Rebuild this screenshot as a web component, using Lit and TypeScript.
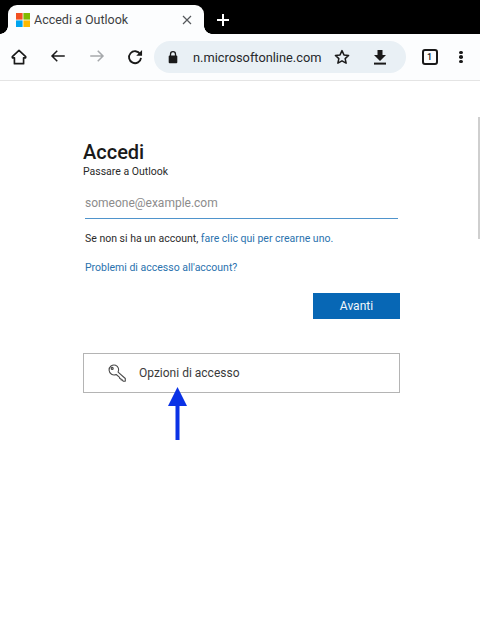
import { LitElement, html, css, svg } from 'lit';
import { customElement } from 'lit/decorators.js';

const icon = (size: number, body: unknown) =>
  html`<svg width=${size} height=${size} viewBox="0 0 24 24" fill="none" stroke="#1a1a1a" stroke-width="2">${body}</svg>`;

@customElement('app-root')
export class AppRoot extends LitElement {
  static styles = css`
    :host {
      display: block;
      position: relative;
      width: 480px;
      height: 633px;
      overflow: hidden;
      background: #fff;
      font-family: Roboto, "Liberation Sans", sans-serif;
      color: #1b1b1b;
    }

    /* browser chrome */
    .strip {
      display: flex;
      align-items: flex-end;
      height: 34px;
      background: #000;
      padding-left: 8px;
      box-sizing: border-box;
    }
    .tab {
      position: relative;
      display: flex;
      align-items: center;
      width: 196px;
      height: 29px;
      box-sizing: border-box;
      padding: 0 12px 0 8px;
      background: #fcfdfe;
      border-radius: 9px 9px 0 0;
      font-size: 12.5px;
      color: #3c3f43;
      gap: 4px;
    }
    .tab::before,
    .tab::after {
      content: '';
      position: absolute;
      bottom: 0;
      width: 8px;
      height: 8px;
    }
    .tab::before {
      left: -8px;
      background: radial-gradient(circle at 0 0, #000 7.5px, #fcfdfe 8px);
    }
    .tab::after {
      right: -8px;
      background: radial-gradient(circle at 100% 0, #000 7.5px, #fcfdfe 8px);
    }
    .tab span { flex: 1; }
    .new-tab { margin: 0 0 4px 9px; height: 20px; }
    .toolbar {
      display: flex;
      align-items: center;
      height: 46px;
      background: #fcfdfe;
      border-bottom: 1px solid #e4e4e4;
    }
    .tool {
      width: 39px;
      display: flex;
      justify-content: center;
      flex: none;
    }
    .tool.reload { margin: 0 1px 0 -1px; }
    .tools-left { display: flex; margin-left: -1px; }
    .omnibox {
      display: flex;
      align-items: center;
      width: 252px;
      height: 32px;
      margin-left: -1px;
      box-sizing: border-box;
      padding-left: 12px;
      background: #e9f0f5;
      border-radius: 16px;
      font-size: 12.8px;
      color: #27292c;
      flex: none;
    }
    .address { margin-left: 13px; white-space: nowrap; }
    .star { margin-left: 12px; display: flex; }
    .save { margin-left: 22px; display: flex; }
    .tabs-count { margin-left: 4px; }
    .count {
      display: flex;
      align-items: center;
      justify-content: center;
      width: 12px;
      height: 12px;
      border: 2px solid #1a1a1a;
      border-radius: 3px;
      font-size: 9px;
      font-weight: 500;
    }
    .menu {
      display: flex;
      flex-direction: column;
      gap: 1px;
      margin-left: 10px;
    }
    .menu i {
      width: 4px;
      height: 3.6px;
      border-radius: 50%;
      background: #1a1a1a;
    }

    /* sign in card */
    .page {
      display: flex;
      flex-direction: column;
      width: 317px;
      padding: 59px 0 0 83px;
    }
    h1 {
      margin: 0;
      font-size: 20px;
      line-height: 25px;
      font-weight: 500;
      color: #1a1a1a;
    }
    .sub {
      font-size: 10.5px;
      line-height: 14px;
      color: #2a2a2a;
    }
    .input {
      margin: 9px 2px 0 2px;
      height: 31px;
      line-height: 30px;
      box-sizing: border-box;
      border-bottom: 1px solid #4f94cc;
      font-size: 12px;
      color: #8c8c8c;
    }
    .note {
      margin: 13px 0 0 2px;
      font-size: 10.5px;
      line-height: 14px;
      color: #2b2b2b;
    }
    a { color: #2a72ae; text-decoration: none; }
    .trouble {
      margin: 15px 0 0 2px;
      font-size: 10.5px;
      line-height: 14px;
    }
    .actions {
      display: flex;
      justify-content: flex-end;
      margin-top: 18px;
    }
    .next {
      display: flex;
      align-items: center;
      justify-content: center;
      width: 87px;
      height: 26px;
      background: #0767b5;
      color: #f2f7fb;
      font-size: 12px;
    }
    .options {
      display: flex;
      align-items: center;
      height: 40px;
      margin-top: 34px;
      padding-left: 23px;
      box-sizing: border-box;
      border: 1px solid #b4b4b4;
      font-size: 12px;
      color: #3a3a3a;
    }
    .options span { margin-left: 12px; }

    /* overlays */
    .scrollbar {
      position: absolute;
      left: 478px;
      top: 117px;
      width: 2px;
      height: 122px;
      background: #cfcfcf;
    }
    .arrow { position: absolute; left: 168px; top: 387px; }
  `;

  render() {
    return html`
      <div class="strip">
        <div class="tab">
          <svg width="14" height="14" viewBox="0 0 14 14">
            <rect width="6.6" height="6.6" fill="#f25022" />
            <rect x="7.4" width="6.6" height="6.6" fill="#7fba00" />
            <rect y="7.4" width="6.6" height="6.6" fill="#00a4ef" />
            <rect x="7.4" y="7.4" width="6.6" height="6.6" fill="#ffb900" />
          </svg>
          <span>Accedi a Outlook</span>
          <svg width="10" height="10" viewBox="0 0 10 10" stroke="#55585c" stroke-width="1.2">
            <path d="M1 1l8 8M9 1l-8 8" />
          </svg>
        </div>
        <svg class="new-tab" width="20" height="20" viewBox="0 0 20 20" stroke="#fff" stroke-width="2">
          <path d="M10 4v12M4 10h12" />
        </svg>
      </div>
      <div class="toolbar">
        <div class="tools-left">
          <div class="tool">
            ${icon(20, svg`<path d="M12 4 4 11.5V13h2.5v7h11v-7H20v-1.5z" stroke-linejoin="round" />`)}
          </div>
          <div class="tool">
            ${icon(18, svg`<path d="M21 12H4M11 5l-7 7 7 7" />`)}
          </div>
          <div class="tool">
            ${html`<svg width="18" height="18" viewBox="0 0 24 24" fill="none" stroke="#a6a9ac" stroke-width="2">
              <path d="M3 12h17M13 5l7 7-7 7" />
            </svg>`}
          </div>
          <div class="tool reload">
            ${icon(20, svg`
              <path d="M18.2 8.5A7.2 7.2 0 1 0 19.2 13" stroke-width="2.2" />
              <path d="M20.5 3.5v7h-7z" fill="#1a1a1a" stroke="none" />
            `)}
          </div>
        </div>
        <div class="omnibox">
          <svg width="14" height="14" viewBox="0 0 14 14">
            <path d="M4.5 6V4.2a2.5 2.5 0 0 1 5 0V6" fill="none" stroke="#1a1a1a" stroke-width="1.3" />
            <rect x="2.7" y="5.6" width="8.6" height="7.6" rx="1" fill="#1a1a1a" />
          </svg>
          <span class="address">n.microsoftonline.com</span>
          <span class="star">
            ${icon(18, svg`<path d="M12 3.5l2.6 5.7 6.2.7-4.6 4.2 1.3 6.1L12 17.1l-5.5 3.1 1.3-6.1-4.6-4.2 6.2-.7z" stroke-linejoin="round" />`)}
          </span>
          <span class="save">
            <svg width="14" height="16" viewBox="0 0 14 16" fill="#1a1a1a">
              <path d="M4.5 1h5v5H13L7 12 1 6h3.5z" />
              <rect x="1" y="13.6" width="12" height="2" />
            </svg>
          </span>
        </div>
        <div class="tool tabs-count"><div class="count">1</div></div>
        <div class="menu"><i></i><i></i><i></i></div>
      </div>
      <div class="page">
        <h1>Accedi</h1>
        <div class="sub">Passare a Outlook</div>
        <div class="input">someone@example.com</div>
        <div class="note">Se non si ha un account, <a>fare clic qui per crearne uno.</a></div>
        <a class="trouble">Problemi di accesso all'account?</a>
        <div class="actions"><div class="next">Avanti</div></div>
        <div class="options">
          <svg width="20" height="20" viewBox="0 0 20 20" fill="none" stroke="#4a4a4a" stroke-width="1.1" stroke-linejoin="round">
            <path d="M8.6 2.2a5 5 0 0 1 2.5 6.9l7.2 6.4v2.6l-1.9.2-1.2-1.4-1.1.1-.2-1.3-1.2-.2-.1-1.2-3.4-2.8A5 5 0 1 1 8.6 2.2z" />
            <circle cx="5.2" cy="5.4" r="1" />
          </svg>
          <span>Opzioni di accesso</span>
        </div>
      </div>
      <div class="scrollbar"></div>
      <svg class="arrow" width="19" height="53" viewBox="0 0 19 53" fill="#0a32e6">
        <path d="M9.5 0 19 19H0z" />
        <rect x="7.5" y="18" width="4" height="35" />
      </svg>
    `;
  }
}
